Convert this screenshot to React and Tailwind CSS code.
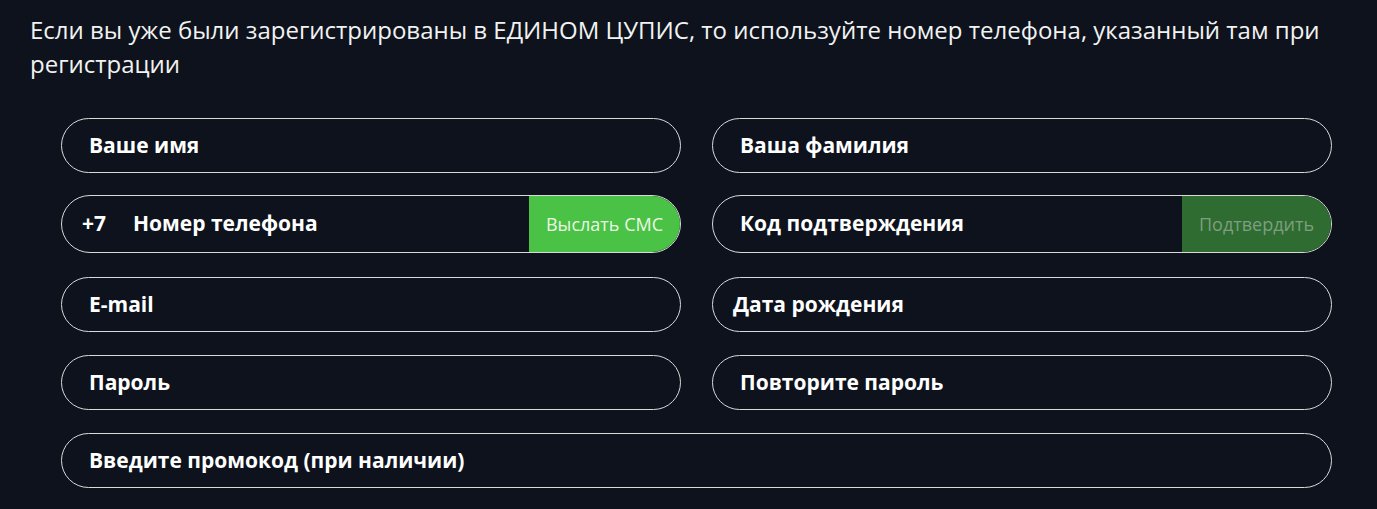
export default function App() {
  const field = "h-[55px] rounded-full border border-[#d9d9d9] flex items-center overflow-hidden";
  const label = "text-[21px] font-bold text-white";
  return (
    <div className="min-h-[509px] w-full bg-[#0d121c] font-['Open_Sans',sans-serif]">
      <p className="pl-[30px] pr-[30px] pt-[13px] text-[24px] leading-[34px] text-[#f2f2f2]">
        Если вы уже были зарегистрированы в ЕДИНОМ ЦУПИС, то используйте номер телефона, указанный там при регистрации
      </p>
      <div className="pl-[61px] pr-[45px] pt-[37px] flex flex-col gap-[23px]">
        <div className="grid grid-cols-2 gap-x-[31px]">
          <div className={field}><span className={`${label} pl-[27px]`}>Ваше имя</span></div>
          <div className={field}><span className={`${label} pl-[27px]`}>Ваша фамилия</span></div>
        </div>
        <div className="grid grid-cols-2 gap-x-[31px] -mt-[1px]">
          <div className={`${field} h-[58px]`}>
            <span className={`${label} pl-[20px] w-[71px] shrink-0`}>+7</span>
            <span className={`${label} flex-1`}>Номер телефона</span>
            <div className="h-full w-[151px] bg-[#4ac245] flex items-center justify-center text-[18px] text-[#eaf7e6]">Выслать СМС</div>
          </div>
          <div className={`${field} h-[58px]`}>
            <span className={`${label} pl-[27px] flex-1`}>Код подтверждения</span>
            <div className="h-full w-[149px] bg-[#2e6c31] flex items-center justify-center text-[18px] text-[#7f9e7f]">Подтвердить</div>
          </div>
        </div>
        <div className="grid grid-cols-2 gap-x-[31px] mt-[1px]">
          <div className={field}><span className={`${label} pl-[27px]`}>E-mail</span></div>
          <div className={field}><span className={`${label} pl-[20px]`}>Дата рождения</span></div>
        </div>
        <div className="grid grid-cols-2 gap-x-[31px]">
          <div className={field}><span className={`${label} pl-[27px]`}>Пароль</span></div>
          <div className={field}><span className={`${label} pl-[27px]`}>Повторите пароль</span></div>
        </div>
        <div className={field}><span className={`${label} pl-[27px]`}>Введите промокод (при наличии)</span></div>
      </div>
    </div>
  );
}
